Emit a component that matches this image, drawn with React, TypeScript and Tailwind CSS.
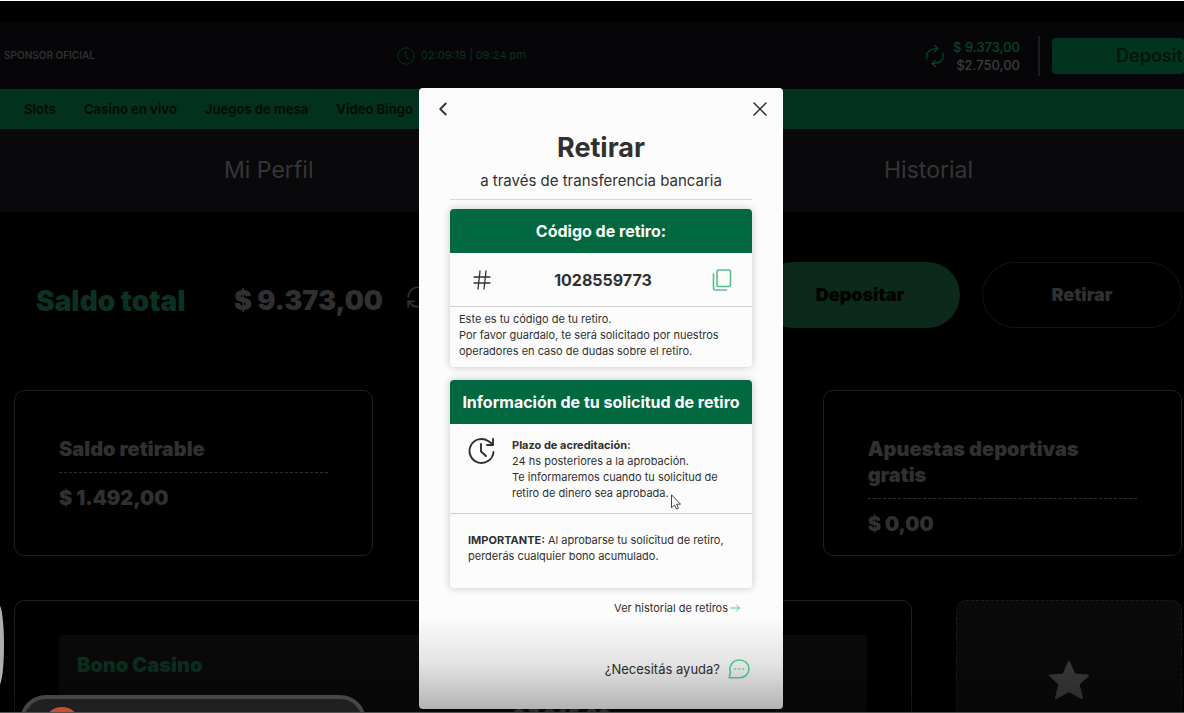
import { useState } from 'react'
import { ChevronLeft, Hash, RefreshCw, X } from 'lucide-react'

const navItems = ['Slots', 'Casino en vivo', 'Juegos de mesa', 'Video Bingo']

interface BalanceCardProps {
  title: string
  amount: string
}

function ClockIcon() {
  return (
    <svg viewBox="0 0 18 18" className="w-[18px] h-[18px]" fill="none" stroke="currentColor" strokeLinecap="round">
      <circle cx="9" cy="9" r="8.2" />
      <path d="M8.7 4v5l3 4" />
    </svg>
  )
}

function SwapIcon() {
  return (
    <svg viewBox="0 0 20 24" className="w-5 h-6" fill="none" stroke="currentColor" strokeWidth="1.2" strokeLinecap="round" strokeLinejoin="round">
      <path d="M2 15C.5 9 4 4.500 12.500 4.500M9.500 1.500l3.500 3-3.500 3" />
      <path d="M18 9c1.500 6-2 10.500-10.500 10.500M10.500 16.500l-3.500 3 3.500 3" />
    </svg>
  )
}

function CopyIcon() {
  return (
    <svg viewBox="0 0 20 22" className="w-5 h-[22px]" fill="none" stroke="currentColor" strokeWidth="1.6" strokeLinecap="round" strokeLinejoin="round">
      <rect x="5" y="1" width="13.500" height="16.500" rx="1.500" />
      <path d="M1.500 5v14a2 2 0 0 0 2 2h11" />
    </svg>
  )
}

function DelayIcon() {
  return (
    <svg viewBox="0 0 28 28" className="w-7 h-7" fill="none" stroke="currentColor" strokeWidth="1.9" strokeLinecap="round" strokeLinejoin="round">
      <path d="M25.500 15A12 12 0 1 1 20.500 4.200L24.500 7" />
      <path d="M25 2v6h-6" />
      <path d="M13 7v7.500l5 4.500" />
    </svg>
  )
}

function ChatIcon() {
  return (
    <svg viewBox="0 0 22 20" className="w-[22px] h-5" fill="none" stroke="currentColor" strokeWidth="1.6" strokeLinejoin="round">
      <path d="M1.200 18.700 2.500 13.500C.2 7 5 1 11.500 1 17 1 21 5 21 9.800s-4 8.900-9.500 8.900z" />
      <path d="M7 10h.6M11 10h.6M15 10h.6" strokeLinecap="round" />
    </svg>
  )
}

function BalanceCard({ title, amount }: BalanceCardProps) {
  return (
    <article className="flex h-[166px] flex-col rounded-[10px] border border-[#202022] px-11 pt-[45px] text-[#303032]">
      <h3 className="text-xl leading-[26px] font-black">{title}</h3>
      <p className="mt-2.5 border-t border-dashed border-[#303032] pt-3 text-xl leading-[26px] font-black">{amount}</p>
    </article>
  )
}

function WithdrawDialog({ onClose }: { onClose: () => void }) {
  const [copied, setCopied] = useState(false)

  const copyCode = () => {
    navigator.clipboard?.writeText('1028559773')
    setCopied(true)
  }

  return (
    <div className="absolute inset-0 flex justify-center pt-[87px] pb-[3px] pl-[18px]">
      <div role="dialog" aria-labelledby="dialog-title" className="flex w-[364px] flex-col rounded-[4px] bg-[#fcfcfc] text-[#303030]">
        <div className="flex items-center justify-between px-[11px] pt-2">
          <button aria-label="Volver" className="p-0.5">
            <ChevronLeft className="h-[22px] w-[22px]" strokeWidth={2} />
          </button>
          <button aria-label="Cerrar" onClick={onClose}>
            <X className="h-6 w-6" strokeWidth={1.5} />
          </button>
        </div>
        <div className="px-[31px]">
          <header className="border-b border-[#d8d8d8] pb-2 text-center">
            <h1 id="dialog-title" className="pt-2 text-[27px] leading-9 font-bold">Retirar</h1>
            <p className="mt-[5px] text-[15px] leading-5">a través de transferencia bancaria</p>
          </header>

          <section className="mt-[9px] rounded-[4px] shadow-[0_0_8px_rgba(0,0,0,0.22)]">
            <h2 className="rounded-t-[4px] bg-[#02683f] text-center text-base leading-[44px] font-bold text-white">Código de retiro:</h2>
            <div className="flex h-[54px] items-center justify-between border-b border-[#d0d0d0] px-5">
              <Hash className="h-6 w-6" strokeWidth={1.3} />
              <span className="text-base font-bold">1028559773</span>
              <button aria-label="Copiar código" aria-pressed={copied} onClick={copyCode} className="text-[#56be8b]">
                <CopyIcon />
              </button>
            </div>
            <p className="px-[9px] pt-1 pb-2 text-[11px] leading-4">
              Este es tu código de tu retiro.
              <br />
              Por favor guardalo, te será solicitado por nuestros operadores en caso de dudas sobre el retiro.
            </p>
          </section>

          <section className="mt-[13px] rounded-[4px] shadow-[0_0_8px_rgba(0,0,0,0.22)]">
            <h2 className="rounded-t-[4px] bg-[#02683f] text-center text-base leading-[44px] font-bold text-white">Información de tu solicitud de retiro</h2>
            <div className="flex gap-4 border-b border-[#d0d0d0] pt-[13px] pr-6 pb-3 pl-[18px]">
              <div className="shrink-0">
                <DelayIcon />
              </div>
              <p className="text-[11px] leading-4">
                <strong className="block font-bold">Plazo de acreditación:</strong>
                24 hs posteriores a la aprobación.
                <br />
                Te informaremos cuando tu solicitud de retiro de dinero sea aprobada.
              </p>
            </div>
            <p className="px-[18px] pt-[18px] pb-6 text-[11px] leading-4">
              <strong className="font-bold">IMPORTANTE:</strong> Al aprobarse tu solicitud de retiro, perderás cualquier bono acumulado.
            </p>
          </section>

          <div className="flex justify-end pt-3 pr-3">
            <a href="#historial" className="flex items-center gap-0.5 text-[11px] leading-4">
              Ver historial de retiros
              <svg viewBox="0 0 10 8" className="h-2 w-2.5" fill="none" stroke="#4fca8b" strokeLinecap="round" strokeLinejoin="round">
                <path d="M.5 4h9M6.500 1l3 3-3 3" />
              </svg>
            </a>
          </div>
        </div>
        <button className="mt-auto mr-[33px] mb-[30px] flex items-center gap-2 self-end text-[13px] leading-5">
          ¿Necesitás ayuda?
          <span className="text-[#52dc9a]">
            <ChatIcon />
          </span>
        </button>
      </div>
    </div>
  )
}

export default function App() {
  const [open, setOpen] = useState(true)

  return (
    <div className="relative h-screen overflow-hidden border-t border-b border-t-white border-b-[#555] bg-black font-['Inter','Liberation_Sans',sans-serif]">
      <header className="mt-[21px] flex h-[67px] items-center bg-[#060608] pl-1">
        <span className="w-[393px] text-[10px] font-semibold text-[#303032]">SPONSOR OFICIAL</span>
        <div className="flex items-center gap-1.5 text-[11px] text-[#06331f]">
          <ClockIcon />
          <span>02:09:19 | 09:24 pm</span>
        </div>
        <div className="ml-auto flex items-center">
          <button aria-label="Actualizar saldo" className="mr-2 text-[#06442a]">
            <SwapIcon />
          </button>
          <div className="text-right text-[13px] leading-[18px] font-medium">
            <div className="text-[#06442a]">$ 9.373,00</div>
            <div className="text-[#3c3c3e]">$2.750,00</div>
          </div>
          <div className="mr-3 ml-[18px] h-10 w-0.5 bg-[#1d1d1f]" />
          <button className="h-9 w-[132px] overflow-hidden rounded-[4px] bg-[#02331e] pl-16 text-left text-lg font-semibold text-[#03150c]">
            Depositar
          </button>
        </div>
      </header>
      <nav className="flex h-10 items-center gap-7 bg-[#02321e] pt-0.5 pl-6 text-[13px] font-bold text-[#020d08]">
        {navItems.map((item) => (
          <a key={item} href="#juegos">{item}</a>
        ))}
      </nav>
      <div className="flex h-[83px] items-center justify-between bg-[#09090b] pr-[211px] pl-56 text-[23px] text-[#353537]">
        <a href="#perfil">Mi Perfil</a>
        <a href="#historial">Historial</a>
      </div>

      <main className="pt-[50px] pr-0.5 pl-3.5">
        <div className="flex items-center text-[#303032]">
          <div className="flex items-center pt-3 text-[28px] font-black">
            <span className="w-[220px] pl-[22px] text-[#0b3221]">Saldo total</span>
            <span className="text-[27px]">$ 9.373,00</span>
            <button aria-label="Actualizar saldo total" className="ml-[22px] pb-2">
              <RefreshCw className="h-[26px] w-[26px]" strokeWidth={1.6} />
            </button>
          </div>
          <div className="ml-auto flex gap-[22px] text-lg font-black">
            <button className="h-[66px] w-[200px] rounded-full bg-[#0c2a1c] text-black">Depositar</button>
            <button className="h-[66px] w-[200px] rounded-full border border-[#0b1917]">Retirar</button>
          </div>
        </div>
        <div className="mt-[62px] grid grid-cols-3 gap-[45px]">
          <BalanceCard title="Saldo retirable" amount="$ 1.492,00" />
          <div />
          <BalanceCard title="Apuestas deportivas gratis" amount="$ 0,00" />
        </div>
        <div className="mt-11 flex gap-11">
          <section className="h-40 flex-1 rounded-[10px] border border-[#202022] px-11 pt-[34px]">
            <div className="h-32 rounded-[4px] bg-[#0a0a0b] px-[18px] pt-[18px] text-xl leading-6 font-black">
              <h3 className="text-[#0b3221]">Bono Casino</h3>
              <p className="pt-[27px] pl-[436px] text-lg leading-6 text-[#39393b]">$ 7.245,80</p>
            </div>
          </section>
          <section className="flex h-40 w-[226px] justify-center rounded-[10px] border border-dashed border-[#10231c] bg-[#0a0a0b] pt-[59px]">
            <svg viewBox="0 0 42 40" className="h-10 w-[42px]" fill="#3c3c3e" stroke="#3c3c3e" strokeWidth="2" strokeLinejoin="round">
              <path d="M21 2l5.500 12.500L40 15.500 30.500 24l3.500 14-13-7-13 7 3.500-14L2 15.500l13.500-1z" />
            </svg>
          </section>
        </div>
      </main>

      {open && <WithdrawDialog onClose={() => setOpen(false)} />}

      <div className="pointer-events-none absolute inset-x-0 bottom-0 h-24 bg-gradient-to-t from-black/30 via-black/10 to-transparent" />
      <div className="absolute top-[604px] -left-1.5 h-20 w-2.5 rounded-[50%] bg-[#aeaeb0]" />
      <div className="absolute top-[694px] left-5 h-16 w-[346px] rounded-[26px] border-4 border-[#464648] bg-[#202022] pt-2 pl-5">
        <div className="h-9 w-9 rounded-full bg-[#c9512f]" />
      </div>
      <svg viewBox="0 0 10 16" className="pointer-events-none absolute top-[493px] left-[671px] h-4 w-2.5" fill="#fff" stroke="#444" strokeLinejoin="round">
        <path d="M.5.8v13l3-2.800 2 4.200 2-1-2-4h4z" />
      </svg>
    </div>
  )
}
